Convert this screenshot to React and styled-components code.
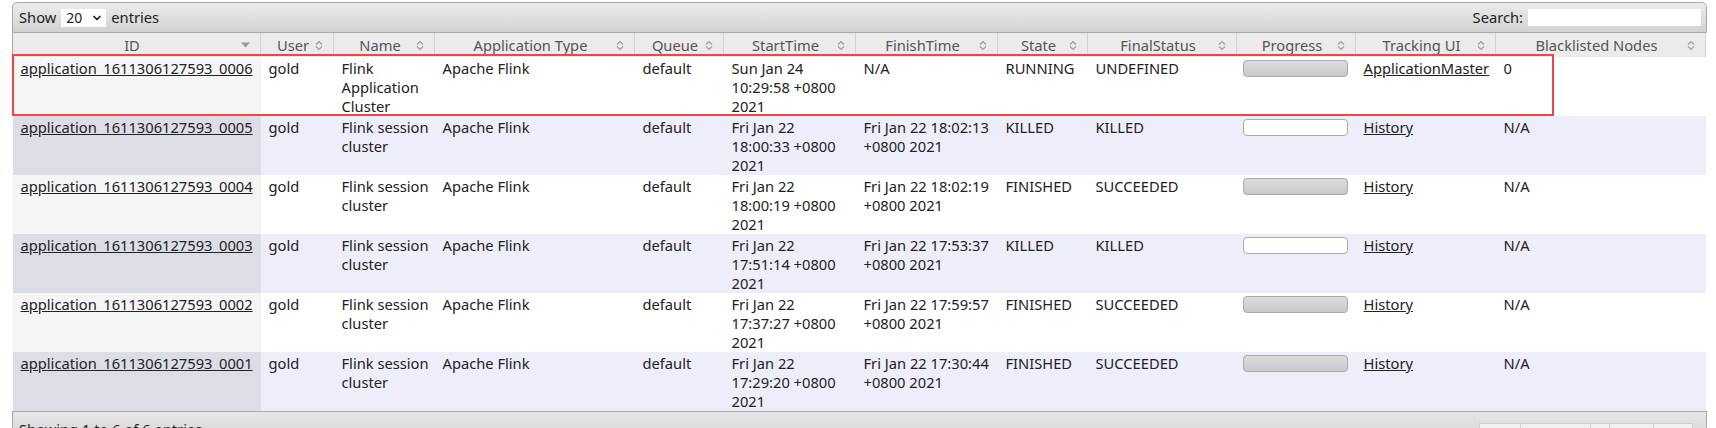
import React from "react";
import styled, { createGlobalStyle } from "styled-components";
import { ChevronDown } from "lucide-react";

const GlobalStyle = createGlobalStyle`
  body {
    margin: 0;
    background: #ffffff;
    font-family: "Noto Sans", "Open Sans", sans-serif;
    font-size: 14.7px;
    line-height: 19px;
    color: #222222;
  }
`;

const Wrapper = styled.div`
  position: relative;
  width: 1695px;
  margin: 2px 0 0 12px;
`;

const ToolBar = styled.div`
  display: flex;
  justify-content: space-between;
  align-items: center;
  height: 29px;
  padding: 0 5px 0 6px;
  border: 1px solid #a9a9a9;
  border-radius: 5px 5px 0 0;
  background: linear-gradient(#ececec, #d2d2d2);
  color: #222;
`;

const ToolGroup = styled.label`
  display: flex;
  align-items: center;
  gap: 5px;
`;

const SelectBox = styled.div`
  display: flex;
  align-items: center;
  justify-content: space-between;
  width: 45px;
  height: 18px;
  padding: 0 3px 0 5px;
  box-sizing: border-box;
  background: #fff;
  font-size: 14px;
`;

const SearchInput = styled.div`
  width: 173px;
  height: 17px;
  background: #fff;
`;

const Table = styled.table`
  width: 1693px;
  table-layout: fixed;
  border-collapse: collapse;
`;

const HeadCell = styled.th`
  height: 24px;
  padding: 0;
  background: #ebebeb;
  border-right: 1px solid #d3d3d3;
  border-left: 1px solid #f7f7f7;
  font-weight: normal;
  color: #555;
  &:first-child {
    border-left: 1px solid #a9a9a9;
  }
`;

const HeadInner = styled.div`
  display: flex;
  align-items: center;
  padding: 0 10px;
`;

const HeadLabel = styled.span`
  flex: 1;
  text-align: center;
  white-space: nowrap;
`;

const Row = styled.tr`
  background: ${({ $alt }) => ($alt ? "#eeeefb" : "#ffffff")};
`;

const Cell = styled.td`
  vertical-align: top;
  padding: 2px 4px 0 8px;
  height: 57px;
  background: ${({ $sorted, $alt }) =>
    $sorted ? ($alt ? "#dddde8" : "#f5f5f5") : "transparent"};
`;

const Link = styled.a`
  color: #222;
  text-decoration: underline;
  white-space: nowrap;
`;

const Progress = styled.div`
  width: 105px;
  height: 17px;
  margin: 1px 0 0 -2px;
  box-sizing: border-box;
  border: 1px solid #aaaaaa;
  border-radius: 4px;
  background: ${({ $done }) =>
    $done ? "linear-gradient(#dcdcdc, #c9c9c9)" : "#ffffff"};
`;

const FooterBar = styled.div`
  display: flex;
  justify-content: space-between;
  align-items: flex-start;
  height: 30px;
  padding: 8px 13px 0 6px;
  border: 1px solid #a9a9a9;
  background: linear-gradient(#e6e6e6, #d0d0d0);
  color: #222;
`;

const Pager = styled.div`
  display: flex;
  margin-top: 3px;
`;

const PageButton = styled.span`
  padding: 0 5px;
  height: 22px;
  border: 1px solid #d0d0d0;
  border-left: none;
  background: linear-gradient(#f2f2f2, #e4e4e4);
  color: #b0b0b0;
  &:first-child {
    border-left: 1px solid #d0d0d0;
  }
`;

const Annotation = styled.div`
  position: absolute;
  left: 0;
  top: 52px;
  width: 1542px;
  height: 62px;
  box-sizing: border-box;
  border: 2px solid #f04545;
  pointer-events: none;
`;

const SortBoth = () => (
  <svg width="8" height="11" viewBox="0 0 8 11" fill="none" stroke="#9a9a9a" strokeWidth="1.1">
    <path d="M1 4.5 L4 1.5 L7 4.5" />
    <path d="M1 6.5 L4 9.5 L7 6.5" />
  </svg>
);

const SortDesc = () => (
  <svg width="9" height="6" viewBox="0 0 9 6">
    <path d="M0 0.5 H9 L4.5 5.5 Z" fill="#9a9a9a" />
  </svg>
);

const columns = [
  { title: "ID", width: 248, desc: true },
  { title: "User", width: 73 },
  { title: "Name", width: 101 },
  { title: "Application Type", width: 200 },
  { title: "Queue", width: 89 },
  { title: "StartTime", width: 132 },
  { title: "FinishTime", width: 142 },
  { title: "State", width: 90 },
  { title: "FinalStatus", width: 149 },
  { title: "Progress", width: 119 },
  { title: "Tracking UI", width: 140 },
  { title: "Blacklisted Nodes", width: 210 },
];

const apps = [
  {
    id: "0006",
    name: "Flink Application Cluster",
    start: "Sun Jan 24 10:29:58 +0800 2021",
    finish: "N/A",
    state: "RUNNING",
    status: "UNDEFINED",
    done: true,
    ui: "ApplicationMaster",
    nodes: "0",
  },
  {
    id: "0005",
    start: "Fri Jan 22 18:00:33 +0800 2021",
    finish: "Fri Jan 22 18:02:13 +0800 2021",
    state: "KILLED",
    status: "KILLED",
    done: false,
  },
  {
    id: "0004",
    start: "Fri Jan 22 18:00:19 +0800 2021",
    finish: "Fri Jan 22 18:02:19 +0800 2021",
    state: "FINISHED",
    status: "SUCCEEDED",
    done: true,
  },
  {
    id: "0003",
    start: "Fri Jan 22 17:51:14 +0800 2021",
    finish: "Fri Jan 22 17:53:37 +0800 2021",
    state: "KILLED",
    status: "KILLED",
    done: false,
  },
  {
    id: "0002",
    start: "Fri Jan 22 17:37:27 +0800 2021",
    finish: "Fri Jan 22 17:59:57 +0800 2021",
    state: "FINISHED",
    status: "SUCCEEDED",
    done: true,
  },
  {
    id: "0001",
    start: "Fri Jan 22 17:29:20 +0800 2021",
    finish: "Fri Jan 22 17:30:44 +0800 2021",
    state: "FINISHED",
    status: "SUCCEEDED",
    done: true,
  },
];

export default function App() {
  return (
    <Wrapper>
      <GlobalStyle />
      <ToolBar>
        <ToolGroup>
          Show
          <SelectBox>
            20
            <ChevronDown size={12} strokeWidth={3.5} color="#222" />
          </SelectBox>
          entries
        </ToolGroup>
        <ToolGroup>
          Search:
          <SearchInput />
        </ToolGroup>
      </ToolBar>
      <Table>
        <colgroup>
          {columns.map((c) => (
            <col key={c.title} style={{ width: c.width }} />
          ))}
        </colgroup>
        <thead>
          <tr>
            {columns.map((c) => (
              <HeadCell key={c.title}>
                <HeadInner>
                  <HeadLabel>{c.title}</HeadLabel>
                  {c.desc ? <SortDesc /> : <SortBoth />}
                </HeadInner>
              </HeadCell>
            ))}
          </tr>
        </thead>
        <tbody>
          {apps.map((a, i) => {
            const alt = i % 2 === 1;
            return (
              <Row key={a.id} $alt={alt}>
                <Cell $sorted $alt={alt}>
                  <Link href="#">application_1611306127593_{a.id}</Link>
                </Cell>
                <Cell>gold</Cell>
                <Cell>{a.name || "Flink session cluster"}</Cell>
                <Cell>Apache Flink</Cell>
                <Cell>default</Cell>
                <Cell>{a.start}</Cell>
                <Cell>{a.finish}</Cell>
                <Cell>{a.state}</Cell>
                <Cell>{a.status}</Cell>
                <Cell>
                  <Progress $done={a.done} />
                </Cell>
                <Cell>
                  <Link href="#">{a.ui || "History"}</Link>
                </Cell>
                <Cell>{a.nodes || "N/A"}</Cell>
              </Row>
            );
          })}
        </tbody>
      </Table>
      <FooterBar>
        <span>Showing 1 to 6 of 6 entries</span>
        <Pager>
          <PageButton>First</PageButton>
          <PageButton>Previous</PageButton>
          <PageButton>1</PageButton>
          <PageButton>Next</PageButton>
          <PageButton>Last</PageButton>
        </Pager>
      </FooterBar>
      <Annotation />
    </Wrapper>
  );
}
